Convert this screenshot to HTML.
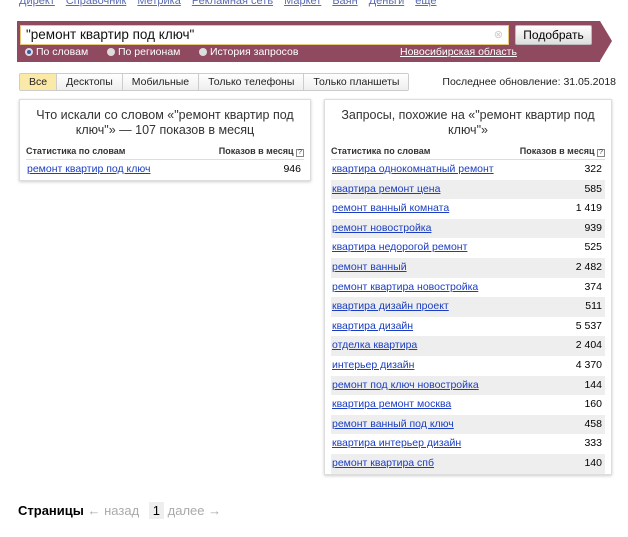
<!DOCTYPE html>
<html><head><meta charset="utf-8"><style>
*{margin:0;padding:0;box-sizing:border-box}
body{width:628px;height:537px;background:#fff;font-family:"Liberation Sans",sans-serif;font-size:11px;color:#000;position:relative;overflow:hidden}
.a{position:absolute;white-space:nowrap}
a{color:#1a3dc1;text-decoration:underline}
.top{top:-5px;left:19px;font-size:11px;color:#5a6bb0}
.top span{margin-right:11px;text-decoration:underline}
.ban{left:17px;top:21px;width:583px;height:41px;background:#8f4a60}
.tip{left:600px;top:21px;width:0;height:0;border-top:20.5px solid transparent;border-bottom:20.5px solid transparent;border-left:12px solid #8f4a60}
.inp{left:20px;top:25px;width:489px;height:20px;background:#fff;border:1px solid #e8c87a;font-size:13.5px;padding:1px 5px;color:#111}
.btn{left:515px;top:25px;width:77px;height:20px;background:linear-gradient(#fff,#ddd);border:1px solid #bbb;border-radius:2px;font-size:12px;text-align:center;line-height:18px}
.rad{top:46px;font-size:10.5px;color:#fff}
.dot{display:inline-block;width:8px;height:8px;border-radius:50%;background:#ddd;margin-right:3px;vertical-align:-1px}
.tabs{left:19px;top:73px;height:18px;display:flex;border:1px solid #ccc;border-radius:2px;font-size:10.5px}
.tabs div{padding:0 9px;line-height:16px;border-right:1px solid #ccc;background:linear-gradient(#fff,#eee);color:#222}
.box{background:#fff;border:1px solid #ddd;box-shadow:0 1px 3px rgba(0,0,0,.2)}
.h{font-size:12.5px;text-align:center;color:#333;line-height:15px;white-space:normal}
.th{font-size:9px;font-weight:bold;color:#333;display:flex;justify-content:space-between;border-bottom:1px solid #ddd;padding-bottom:2px}
.r{display:flex;justify-content:space-between;height:19.6px;line-height:19.6px;font-size:10.5px;padding:0 3px 0 1px}
.r.g{background:#eee}
.q{display:inline-block;width:8px;height:8px;border:1px solid #888;font-size:7px;line-height:6px;text-align:center;font-weight:normal}
</style></head><body>
<div class="a top"><span>Директ</span><span>Справочник</span><span>Метрика</span><span>Рекламная сеть</span><span>Маркет</span><span>Баян</span><span>Деньги</span><span>ещё</span></div>
<div class="a ban"></div><div class="a tip"></div>
<div class="a inp">"ремонт квартир под ключ"<span style="position:absolute;right:5px;top:2px;color:#ccc;font-size:11px">⊗</span></div>
<div class="a btn">Подобрать</div>
<div class="a rad" style="left:25px"><span class="dot" style="background:#3a5bb0;border:2px solid #ddd"></span>По словам</div>
<div class="a rad" style="left:107px"><span class="dot"></span>По регионам</div>
<div class="a rad" style="left:199px"><span class="dot"></span>История запросов</div>
<div class="a rad" style="left:400px;text-decoration:underline">Новосибирская область</div>
<div class="a tabs"><div style="background:#fbe9a8">Все</div><div>Десктопы</div><div>Мобильные</div><div>Только телефоны</div><div style="border-right:0">Только планшеты</div></div>
<div class="a" style="right:12px;top:76px;color:#222;font-size:10.5px">Последнее обновление: 31.05.2018</div>
<div class="a box" style="left:19px;top:99px;width:292px;height:82px;padding:8px 6px">
<div class="h">Что искали со словом «"ремонт квартир под ключ"» — 107 показов в месяц</div>
<div class="th" style="margin-top:8px"><span>Статистика по словам</span><span>Показов в месяц <span class="q">?</span></span></div>
<div class="r"><a>ремонт квартир под ключ</a><span>946</span></div>
</div>
<div class="a box" style="left:324px;top:99px;width:288px;height:376px;padding:8px 6px">
<div class="h">Запросы, похожие на «"ремонт квартир под ключ"»</div>
<div class="th" style="margin-top:8px"><span>Статистика по словам</span><span>Показов в месяц <span class="q">?</span></span></div>
<div class="r"><a>квартира однокомнатный ремонт</a><span>322</span></div>
<div class="r g"><a>квартира ремонт цена</a><span>585</span></div>
<div class="r"><a>ремонт ванный комната</a><span>1 419</span></div>
<div class="r g"><a>ремонт новостройка</a><span>939</span></div>
<div class="r"><a>квартира недорогой ремонт</a><span>525</span></div>
<div class="r g"><a>ремонт ванный</a><span>2 482</span></div>
<div class="r"><a>ремонт квартира новостройка</a><span>374</span></div>
<div class="r g"><a>квартира дизайн проект</a><span>511</span></div>
<div class="r"><a>квартира дизайн</a><span>5 537</span></div>
<div class="r g"><a>отделка квартира</a><span>2 404</span></div>
<div class="r"><a>интерьер дизайн</a><span>4 370</span></div>
<div class="r g"><a>ремонт под ключ новостройка</a><span>144</span></div>
<div class="r"><a>квартира ремонт москва</a><span>160</span></div>
<div class="r g"><a>ремонт ванный под ключ</a><span>458</span></div>
<div class="r"><a>квартира интерьер дизайн</a><span>333</span></div>
<div class="r g"><a>ремонт квартира спб</a><span>140</span></div>
</div>
<div class="a" style="left:18px;top:503px;font-size:13px"><b>Страницы</b> <span style="color:#aaa">← назад</span> <span style="background:#eee;padding:1px 4px;margin-left:6px">1</span> <span style="color:#aaa">далее →</span></div>
</body></html>
